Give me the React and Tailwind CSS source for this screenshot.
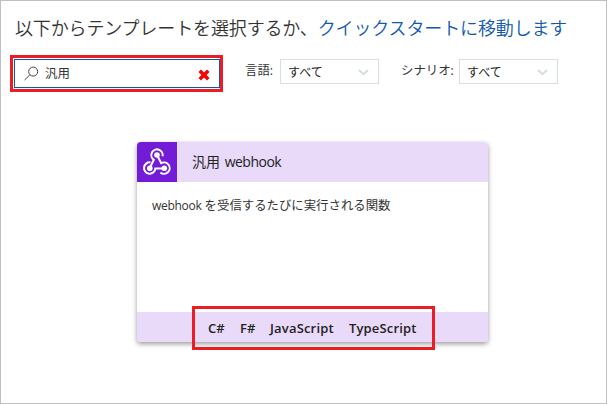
const JP = "font-['Open_Sans','Noto_Sans_CJK_JP',sans-serif]";

function SearchIcon() {
  return (
    <svg width="15" height="15" viewBox="0 0 15 15" fill="none" stroke="#444" strokeWidth="1">
      <circle cx="9.2" cy="5.6" r="4.5" />
      <path d="M5.8 8.9 L0.6 14" />
    </svg>
  );
}

function ClearIcon() {
  return (
    <svg width="12" height="12" viewBox="0 0 12 12" stroke="#fa0000" strokeWidth="3.6">
      <path d="M1.7 1.7 L10.3 10.3 M10.3 1.7 L1.7 10.3" />
    </svg>
  );
}

function WebhookIcon() {
  return (
    <svg width="40" height="40" viewBox="0 0 40 40" fill="none" stroke="#fff" strokeWidth="2">
      <path d="M25.6 14.2 A5.7 5.7 0 1 0 16.8 17.8 L13.2 25" />
      <path d="M13.4 20.4 A5.7 5.7 0 1 0 18.4 26.4 L27 26.4" />
      <path d="M20 13 L24.2 21.2 A5.7 5.7 0 1 1 23.4 30.6" />
      <g fill="#fff" stroke="none">
        <circle cx="20" cy="13" r="2.8" />
        <circle cx="12.8" cy="26.2" r="2.8" />
        <circle cx="27.3" cy="26.3" r="2.8" />
      </g>
    </svg>
  );
}

function Select({ value }) {
  return (
    <div className="flex h-[25px] w-[99px] items-center justify-between border border-[#d6dfe3] pr-[9px] pl-[7px] text-[12px] text-[#222]">
      <span className="pt-[2px]">{value}</span>
      <svg width="11" height="7" viewBox="0 0 11 7" fill="none" stroke="#d3dde1" strokeWidth="1.9" className="mt-[2px]">
        <path d="M1 1 L5.5 5.3 L10 1" />
      </svg>
    </div>
  );
}

export default function App() {
  return (
    <div lang="ja" className={`h-[404px] w-[607px] overflow-hidden border border-[#c0c0c0] bg-white text-[#333] ${JP} font-normal`}>
      <h1 className="mt-[13px] ml-[14px] h-7 text-[18px] leading-7 font-[350] tracking-[-0.14px] whitespace-nowrap">
        以下からテンプレートを選択するか、<a className="text-[#1058b0]">クイックスタートに移動します</a>
      </h1>
      <div className="mt-[13px] ml-[9px] flex items-start">
        <div className="h-[37px] w-[213px] border-3 border-[#ed1c24] p-px">
          <div className="flex h-[29px] w-[206px] items-center border border-[#0f58a8] pr-[9px] pl-[9px]">
            <SearchIcon />
            <span className="ml-[6px] text-[12.4px] leading-4">汎用</span>
            <span className="mt-[2px] ml-auto">
              <ClearIcon />
            </span>
          </div>
        </div>
        <div className="mt-[4px] ml-[22px] flex h-[25px] text-[12.4px]">
          <span className="w-[35px] leading-[23px] whitespace-nowrap">言語:</span>
          <Select value="すべて" />
        </div>
        <div className="mt-[4px] ml-[22px] flex h-[25px] text-[12.4px]">
          <span className="w-[58px] leading-[23px] whitespace-nowrap">シナリオ:</span>
          <Select value="すべて" />
        </div>
      </div>
      <div className="relative mt-[50px] ml-[136px] h-[200px] w-[351px]">
        <div className="flex h-full flex-col overflow-hidden rounded-[4px] bg-white shadow-[0_2px_5px_rgba(0,0,0,0.4)]">
          <div className="flex h-10 items-center bg-[#e9dafa]">
            <div className="h-10 w-10 bg-[#721cd8]">
              <WebhookIcon />
            </div>
            <span className="ml-[15px] pb-px text-[14px] leading-5 text-[#222]">
              汎用 <span className="ml-[1px] tracking-[-0.5px]">webhook</span>
            </span>
          </div>
          <p className="flex-1 pt-[14px] pl-[15px] text-[12.4px] leading-5">
            <span className="text-[12px] tracking-[-0.3px]">webhook</span> を受信するたびに実行される関数
          </p>
          <div className="flex h-[30px] items-center gap-[15px] bg-[#e9dafa] pt-[3px] pl-[71px] text-[13px] font-semibold text-[#222]">
            <span className="w-[17px]">C#</span>
            <span className="w-[15px]">F#</span>
            <span className="w-[64px] tracking-[0.18px]">JavaScript</span>
            <span className="tracking-[0.15px]">TypeScript</span>
          </div>
        </div>
        <div className="absolute top-[164px] left-[55px] h-[44px] w-[243px] border-3 border-[#ed1c24]" />
      </div>
    </div>
  );
}
